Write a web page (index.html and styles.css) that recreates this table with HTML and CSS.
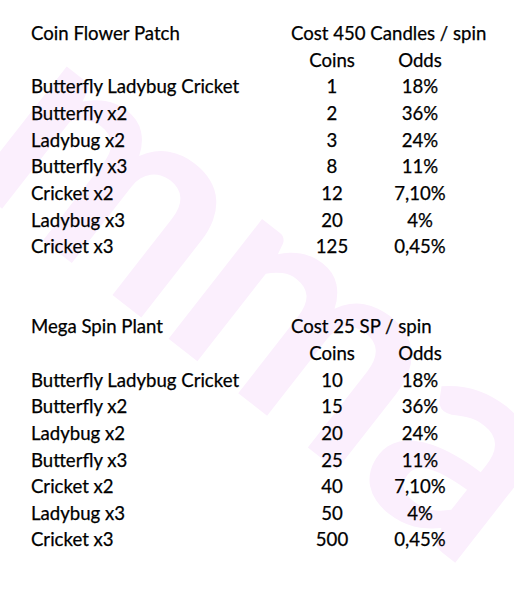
FILE: index.html
```html
<!DOCTYPE html>
<html>
<head>
<meta charset="utf-8">
<link rel="stylesheet" href="styles.css">
</head>
<body>
<div class="page">
  <svg class="watermark" width="514" height="600" viewBox="0 0 514 600" aria-hidden="true">
    <text x="-41" y="175" transform="rotate(38 -41 175)">mma</text>
  </svg>
  <div class="sheet">
    <div class="cell name">Coin Flower Patch</div>
    <div class="cell cost">Cost 450 Candles / spin</div>
    <div class="cell"></div>
    <div class="cell num">Coins</div>
    <div class="cell num">Odds</div>

    <div class="cell name">Butterfly Ladybug Cricket</div><div class="cell num">1</div><div class="cell num">18%</div>
    <div class="cell name">Butterfly x2</div><div class="cell num">2</div><div class="cell num">36%</div>
    <div class="cell name">Ladybug x2</div><div class="cell num">3</div><div class="cell num">24%</div>
    <div class="cell name">Butterfly x3</div><div class="cell num">8</div><div class="cell num">11%</div>
    <div class="cell name">Cricket x2</div><div class="cell num">12</div><div class="cell num">7,10%</div>
    <div class="cell name">Ladybug x3</div><div class="cell num">20</div><div class="cell num">4%</div>
    <div class="cell name">Cricket x3</div><div class="cell num">125</div><div class="cell num">0,45%</div>

    <div class="cell blank"></div>
    <div class="cell blank"></div>

    <div class="cell name">Mega Spin Plant</div>
    <div class="cell cost">Cost 25 SP / spin</div>
    <div class="cell"></div>
    <div class="cell num">Coins</div>
    <div class="cell num">Odds</div>

    <div class="cell name">Butterfly Ladybug Cricket</div><div class="cell num">10</div><div class="cell num">18%</div>
    <div class="cell name">Butterfly x2</div><div class="cell num">15</div><div class="cell num">36%</div>
    <div class="cell name">Ladybug x2</div><div class="cell num">20</div><div class="cell num">24%</div>
    <div class="cell name">Butterfly x3</div><div class="cell num">25</div><div class="cell num">11%</div>
    <div class="cell name">Cricket x2</div><div class="cell num">40</div><div class="cell num">7,10%</div>
    <div class="cell name">Ladybug x3</div><div class="cell num">50</div><div class="cell num">4%</div>
    <div class="cell name">Cricket x3</div><div class="cell num">500</div><div class="cell num">0,45%</div>
  </div>
</div>
</body>
</html>
```
FILE: styles.css
```css
html, body {
  margin: 0;
  padding: 0;
  background: #ffffff;
}
.page {
  position: relative;
  width: 514px;
  height: 600px;
  overflow: hidden;
}
.watermark {
  position: absolute;
  left: 0;
  top: 0;
  z-index: 0;
}
.watermark text {
  font-family: Lato, sans-serif;
  font-weight: 700;
  font-size: 296px;
  fill: #fbeffd;
}
.sheet {
  position: relative;
  z-index: 1;
  display: grid;
  grid-template-columns: 260px 82px 94px;
  grid-auto-rows: 26.67px;
  padding: 20px 0 0 31px;
  font-family: Lato, "Open Sans", sans-serif;
  font-size: 18.6px;
  line-height: 26.67px;
  color: #000;
  -webkit-text-stroke: 0.25px #000;
}
.cell {
  white-space: nowrap;
}
.cost {
  grid-column: 2 / 4;
}
.num {
  text-align: center;
}
.blank {
  grid-column: 1 / 4;
}
```
